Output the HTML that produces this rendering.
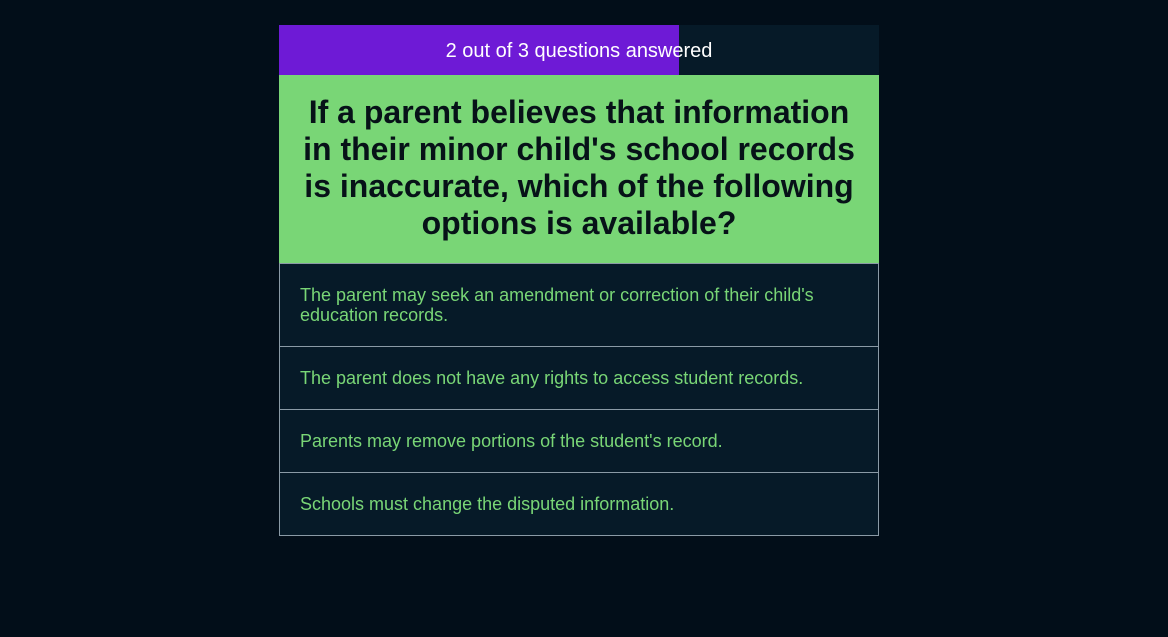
<!DOCTYPE html>
<html><head><meta charset="utf-8"><style>
body{margin:0;background:#020e19;width:1168px;height:637px;font-family:"Liberation Sans",Arial,sans-serif;overflow:hidden}
.wrap{position:absolute;left:279px;top:25px;width:600px}
.bar{height:50px;background:#061a28;position:relative}
.fill{position:absolute;left:0;top:0;bottom:0;width:400px;background:#6e1ad6}
.bar span{position:absolute;left:0;right:0;top:0;line-height:52px;text-align:center;color:#fff;font-size:20px}
.q{background:#79d676;height:188px;box-sizing:border-box;padding:19px 20px 0;text-align:center;font-weight:bold;font-size:32px;line-height:37px;color:#071218}
.o{background:#061a28;border:1px solid #8a9aa6;border-top:none;color:#79d676;font-size:18px;line-height:20px;padding:0 20px;display:flex;align-items:center;box-sizing:border-box}
</style></head><body>
<div class="wrap">
<div class="bar"><div class="fill"></div><span>2 out of 3 questions answered</span></div>
<div class="q">If a parent believes that information in their minor child's school records is inaccurate, which of the following options is available?</div>
<div class="o" style="height:84px;border-top:1px solid #8a9aa6">The parent may seek an amendment or correction of their child's education records.</div>
<div class="o" style="height:63px">The parent does not have any rights to access student records.</div>
<div class="o" style="height:63px">Parents may remove portions of the student's record.</div>
<div class="o" style="height:63px">Schools must change the disputed information.</div>
</div>
</body></html>
